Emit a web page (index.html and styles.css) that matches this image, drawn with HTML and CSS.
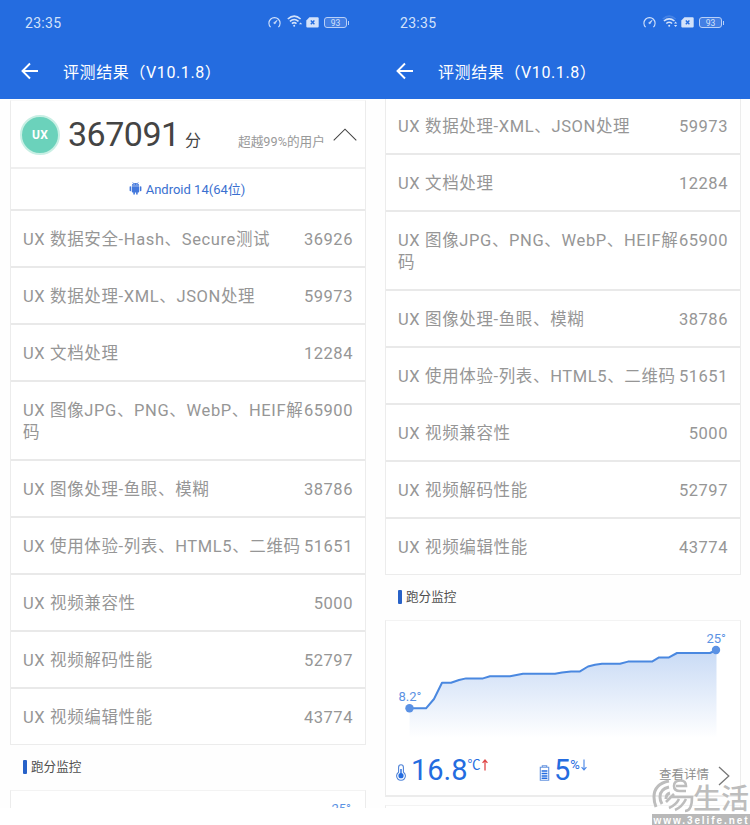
FILE: index.html
```html
<!DOCTYPE html>
<html lang="zh-CN">
<head>
<meta charset="utf-8">
<title>评测结果</title>
<link rel="stylesheet" href="styles.css">
</head>
<body>
<svg class="defs" width="0" height="0">
  <symbol id="gauge" viewBox="0 0 13 13"><path d="M2.6 11.2A5.6 5.6 0 1 1 10.4 11.2" fill="none" stroke="currentColor" stroke-width="1.1"/><path d="M5.6 6.9L9.2 4.2L6.9 8Z" fill="currentColor" stroke="currentColor" stroke-width=".6"/></symbol>
  <symbol id="sim" viewBox="0 0 13 11"><path d="M3.4 .3H11.6Q12.7 .3 12.7 1.4V9.4Q12.7 10.5 11.6 10.5H1.4Q.3 10.5 .3 9.4V3.4Z" fill="currentColor"/><path d="M4.8 3.6L8.4 7.2M8.4 3.6L4.8 7.2" stroke="#246ce0" stroke-width="1.4"/></symbol>
  <symbol id="back" viewBox="0 0 18 18"><path d="M17 9H2M9 1.5L1.5 9L9 16.5" fill="none" stroke="#fff" stroke-width="1.9"/></symbol>
</svg>
<main class="stage">
  <section class="phone">
    <header class="top">
      <div class="status"><span class="clock">23:35</span>
        <div class="sys">
          <svg width="13" height="13"><use href="#gauge"/></svg>
          <svg class="wifi" width="16" height="13" viewBox="0 0 16 13" fill="none" stroke="currentColor" stroke-width="1.6"><path d="M.8 4Q7.2 -1.7 13.6 4M2.9 6.4Q7.2 2.6 11.5 6.4M4.9 8.7Q7.2 6.7 9.5 8.7"/><circle cx="7.2" cy="10.8" r="1" fill="currentColor" stroke="none"/><path d="M12 9.3L13.6 7.4L15.2 9.3Z" fill="currentColor" stroke="none"/></svg>
          <svg class="sim" width="13" height="11"><use href="#sim"/></svg>
          <span class="battery">93</span>
        </div>
      </div>
      <div class="title"><svg width="18" height="18"><use href="#back"/></svg><h1>评测结果（V10.1.8）</h1></div>
    </header>
    <div class="card first">
      <div class="summary">
        <span class="badge">UX</span><strong>367091</strong><span class="unit">分</span>
        <span class="rank">超越99%的用户</span>
        <svg class="chev" width="24" height="13" viewBox="0 0 24 13"><path d="M.7 12.3L12 1.2L23.3 12.3" fill="none" stroke="#444" stroke-width="1.1"/></svg>
      </div>
      <div class="os"><svg width="13" height="13" viewBox="0 0 13 13" fill="#4378dc"><path d="M2.8 3.7Q3 1.1 6.5 1.1T10.2 3.7ZM2.8 4.3H10.2V9.5Q10.2 10.4 9.3 10.4H8.7V12.5H7.1V10.4H5.9V12.5H4.3V10.4H3.7Q2.8 10.4 2.8 9.5Z"/><rect x=".6" y="4.3" width="1.5" height="5" rx=".7"/><rect x="10.9" y="4.3" width="1.5" height="5" rx=".7"/><path d="M3.6 .2L4.7 1.8M9.4 .2L8.3 1.8" stroke="#4378dc" stroke-width=".6"/><path d="M4.7 2.4H5.5M7.5 2.4H8.3" stroke="#fff" stroke-width=".7"/></svg>Android 14(64位)</div>
      <div class="row"><span>UX 数据安全-Hash、Secure测试</span><b>36926</b></div>
      <div class="row"><span>UX 数据处理-XML、JSON处理</span><b>59973</b></div>
      <div class="row"><span>UX 文档处理</span><b>12284</b></div>
      <div class="row"><span>UX 图像JPG、PNG、WebP、HEIF解<br>码</span><b>65900</b></div>
      <div class="row"><span>UX 图像处理-鱼眼、模糊</span><b>38786</b></div>
      <div class="row"><span>UX 使用体验-列表、HTML5、二维码</span><b>51651</b></div>
      <div class="row"><span>UX 视频兼容性</span><b>5000</b></div>
      <div class="row"><span>UX 视频解码性能</span><b>52797</b></div>
      <div class="row"><span>UX 视频编辑性能</span><b>43774</b></div>
    </div>
    <h2>跑分监控</h2>
    <div class="card monitor"><svg width="354" height="176" viewBox="0 0 354 176"><text class="deg" x="320.5" y="21.5">25°</text></svg></div>
  </section>

  <section class="phone">
    <header class="top">
      <div class="status"><span class="clock">23:35</span>
        <div class="sys">
          <svg width="13" height="13"><use href="#gauge"/></svg>
          <svg class="wifi" width="16" height="13" viewBox="0 0 16 13" fill="none" stroke="currentColor" stroke-width="1.6"><path d="M.8 4Q7.2 -1.7 13.6 4" opacity=".2"/><path d="M1.9 6Q7.2 1.6 12.5 6M4.3 8.5Q7.2 6 10.1 8.5"/><circle cx="7.2" cy="10.8" r="1" fill="currentColor" stroke="none"/><path d="M12 8.6L13.6 6.6L15.2 8.6ZM12 9.9L13.6 11.9L15.2 9.9Z" fill="currentColor" stroke="none"/></svg>
          <svg class="sim" width="13" height="11"><use href="#sim"/></svg>
          <span class="battery">93</span>
        </div>
      </div>
      <div class="title"><svg width="18" height="18"><use href="#back"/></svg><h1>评测结果（V10.1.8）</h1></div>
    </header>
    <div class="card scrolled">
      <div class="row"><span>UX 数据处理-XML、JSON处理</span><b>59973</b></div>
      <div class="row"><span>UX 文档处理</span><b>12284</b></div>
      <div class="row"><span>UX 图像JPG、PNG、WebP、HEIF解<br>码</span><b>65900</b></div>
      <div class="row"><span>UX 图像处理-鱼眼、模糊</span><b>38786</b></div>
      <div class="row"><span>UX 使用体验-列表、HTML5、二维码</span><b>51651</b></div>
      <div class="row"><span>UX 视频兼容性</span><b>5000</b></div>
      <div class="row"><span>UX 视频解码性能</span><b>52797</b></div>
      <div class="row"><span>UX 视频编辑性能</span><b>43774</b></div>
    </div>
    <h2>跑分监控</h2>
    <div class="card monitor">
      <svg class="chart" width="354" height="122" viewBox="0 1 354 122">
        <defs><linearGradient id="fade" x1="0" y1="0" x2="0" y2="1"><stop offset="0" stop-color="#c8daf5"/><stop offset="1" stop-color="#fff"/></linearGradient></defs>
        <path fill="url(#fade)" d="M23.5 88.3H40L48 79L56 62.7H65L73 60L80 58.4H97L104 56.3H124L137 53.8H169L176 52.5L185 51.4H194L202 46.5L209 44.8L216 43.8H234L242 41.6H266L273 37.4H283L291 33H324L330.5 30V118H23.5Z"/>
        <path fill="none" stroke="#4a88e0" stroke-width="2" stroke-linejoin="round" d="M23.5 88.3H40L48 79L56 62.7H65L73 60L80 58.4H97L104 56.3H124L137 53.8H169L176 52.5L185 51.4H194L202 46.5L209 44.8L216 43.8H234L242 41.6H266L273 37.4H283L291 33H324L330.5 30"/>
        <circle cx="23.5" cy="88.3" r="4.2" fill="#5a91e4"/><circle cx="330" cy="30" r="4.2" fill="#5a91e4"/>
        <text class="deg" x="12.5" y="81">8.2°</text><text class="deg" x="320.5" y="22.5">25°</text>
      </svg>
      <div class="stats">
        <div class="stat temp"><svg width="12" height="17" viewBox="0 0 12 17"><path d="M3.6 8.2V3.2Q3.6 .8 6 .8T8.4 3.2V8.2A4.4 4.4 0 1 1 3.6 8.2Z" fill="none" stroke="#4f83d8" stroke-width="1.1"/><circle cx="6" cy="11.7" r="2.6" fill="#246ce0"/><path d="M6 5V11" stroke="#246ce0" stroke-width="1.4"/></svg><b>16.8</b><sup>℃</sup><svg class="arrow" width="6" height="12" viewBox="0 0 6 12"><path d="M3 11.5V1M.6 3.8L3 1L5.4 3.8" fill="none" stroke="#e04848" stroke-width="1.3"/></svg></div>
        <div class="stat power"><svg width="11" height="16" viewBox="0 0 11 16"><path d="M3.3 2V.7H7.7V2M1.3 2.3H9.7V15.2H1.3Z" fill="none" stroke="#6594df" stroke-width="1.1"/><path d="M2.6 6H8.4M2.6 8.5H8.4M2.6 11H8.4M2.6 13.3H8.4" stroke="#246ce0" stroke-width="1.4"/></svg><b>5</b><sup>%</sup><svg class="arrow" width="6" height="12" viewBox="0 0 6 12"><path d="M3 .5V11M.6 8.2L3 11L5.4 8.2" fill="none" stroke="#4584e6" stroke-width="1.1"/></svg></div>
        <div class="more">查看详情<svg width="12" height="20" viewBox="0 0 12 20"><path d="M1 1L10.8 10L1 19" fill="none" stroke="#777" stroke-width="1.3"/></svg></div>
      </div>
    </div>
    <div class="card next"></div>
  </section>

  <svg class="mark" width="98" height="46" viewBox="0 0 98 46">
    <g fill="none" stroke="#bdbdbd" stroke-width="3">
      <path d="M17 2Q2 5 2 18Q2 23 4 28M17 8Q8 10 8 18Q8 22 10 25M18 14Q14 15 14 20"/>
      <path d="M24 7H34Q34 1.5 28.5 1.5Q22 1.5 22 7Q22 12 28 12H34M22 15L14 23M19 18H40Q40 32 33 32M27 20Q24 26 17 29M34 20Q30 28 23 31" stroke-width="2.6"/>
    </g>
    <text class="brand" x="41" y="30" textLength="56">生活</text>
    <rect y="35" width="98" height="11" fill="#b9b9b9"/>
    <text class="url" x="1.5" y="44.5" textLength="94">www.3elife.net</text>
  </svg>
</main>
</body>
</html>
```
FILE: styles.css
```css
* { box-sizing: border-box; }
body { margin: 0; background: #fff; font-family: Roboto, "Noto Sans CJK SC", sans-serif; }
.defs { position: absolute; }
.stage { position: relative; display: flex; width: 750px; height: 825px; overflow: hidden; }
.phone { width: 375px; height: 808px; overflow: hidden; background: #fefefe; }
svg { display: block; flex: none; }

.top { height: 99px; background: #246ce0; color: #fff; }
.status { display: flex; justify-content: space-between; align-items: center; height: 45px; padding: 0 28px 0 25px; color: #d3e2fa; }
.clock { font-size: 14px; letter-spacing: .3px; }
.sys { display: flex; align-items: center; }
.wifi { margin-left: 6px; margin-top: -2px; }
.sim { margin-left: 3px; margin-top: -1px; }
.battery { position: relative; width: 23px; height: 11px; margin: -1px 0 0 5px; border: 1px solid #b9d0f7; border-radius: 3px; background: #437fe4; font-size: 8.5px; line-height: 10px; text-align: center; }
.battery::after { content: ""; position: absolute; right: -3px; top: 3px; width: 1px; height: 4px; background: #b9d0f7; }
.title { display: flex; align-items: center; height: 51px; padding-left: 21px; }
h1 { margin: 0 0 0 24px; font-size: 16px; font-weight: 400; letter-spacing: .6px; white-space: nowrap; }

.card { width: 356px; margin-left: 10px; border: 1px solid #ececec; background: #fff; }
.card.first { margin-top: 1px; border-top-color: #f8f8f8; }
.summary { display: flex; height: 68px; padding: 0 8px 0 9px; border-bottom: 2px solid #efefef; }
.badge { width: 40px; height: 40px; margin-top: 14px; border: 2px solid #c8efe4; border-radius: 50%; background: #6bd2bb; color: #fff; font-size: 12px; font-weight: 700; line-height: 37px; text-align: center; letter-spacing: .2px; }
.summary strong { width: 111px; margin: 10px 0 0 8px; font-size: 34px; line-height: 46px; font-weight: 400; color: #444; letter-spacing: -.5px; }
.unit { margin: 29px 0 0 6px; font-size: 16px; line-height: 22px; color: #444; }
.rank { margin: 31px 8px 0 auto; font-size: 12.7px; line-height: 20px; color: #999; white-space: nowrap; }
.chev { margin-top: 27px; }
.os { display: flex; align-items: center; justify-content: center; gap: 4px; height: 42px; padding: 0 2px 2px 0; border-bottom: 2px solid #e9e9e9; color: #3a70d0; font-size: 13px; }
.row { display: flex; justify-content: space-between; padding: 18px 12px 15px; border-bottom: 2px solid #e9e9e9; color: #969696; font-size: 16.5px; line-height: 22px; letter-spacing: .55px; white-space: nowrap; }
.row span { letter-spacing: .63px; }
.row b { font-weight: 400; }
.row:last-child { border-bottom: 0; }
.scrolled { border-top: 0; }
.scrolled .row:first-child { padding-top: 17px; }

h2 { display: flex; align-items: center; height: 44px; margin: 0 0 0 23px; color: #505050; font-size: 12.6px; line-height: 18px; font-weight: 400; }
h2::before { content: ""; width: 4px; height: 14px; margin-right: 4px; border-radius: 1px; background: #2862c8; }
.monitor { height: 177px; margin-top: 1px; border-bottom: 2px solid #ececec; border-top-color: #f3f3f3; }
.deg { fill: #5b92e3; font-size: 13px; }
.stats { display: flex; padding-left: 9px; }
.stat { display: flex; align-items: flex-end; height: 41px; color: #246ce0; }
.stat > svg:first-child { margin-bottom: 3px; }
.stat b { margin-left: 4px; font-size: 29px; font-weight: 400; line-height: 40px; align-self: flex-start; margin-top: 7px; }
.temp { width: 144px; }
.power { width: 120px; }
.stat sup { align-self: flex-start; margin-top: 14px; font-size: 13px; line-height: 16px; }
.arrow { align-self: flex-start; margin: 16px 0 0 1px; }
.more { display: flex; margin-top: 22px; color: #909090; font-size: 12.5px; line-height: 20px; white-space: nowrap; }
.more svg { margin: 1px 0 0 9px; }
.next { height: 10px; margin-top: 8px; border-top-color: #f3f3f3; }

.mark { position: absolute; left: 652px; top: 779px; }
.brand { fill: #bdbdbd; font: 500 28px "Noto Sans CJK SC", sans-serif; }
.url { fill: #fff; font: 700 10px "Liberation Sans", sans-serif; }
```
